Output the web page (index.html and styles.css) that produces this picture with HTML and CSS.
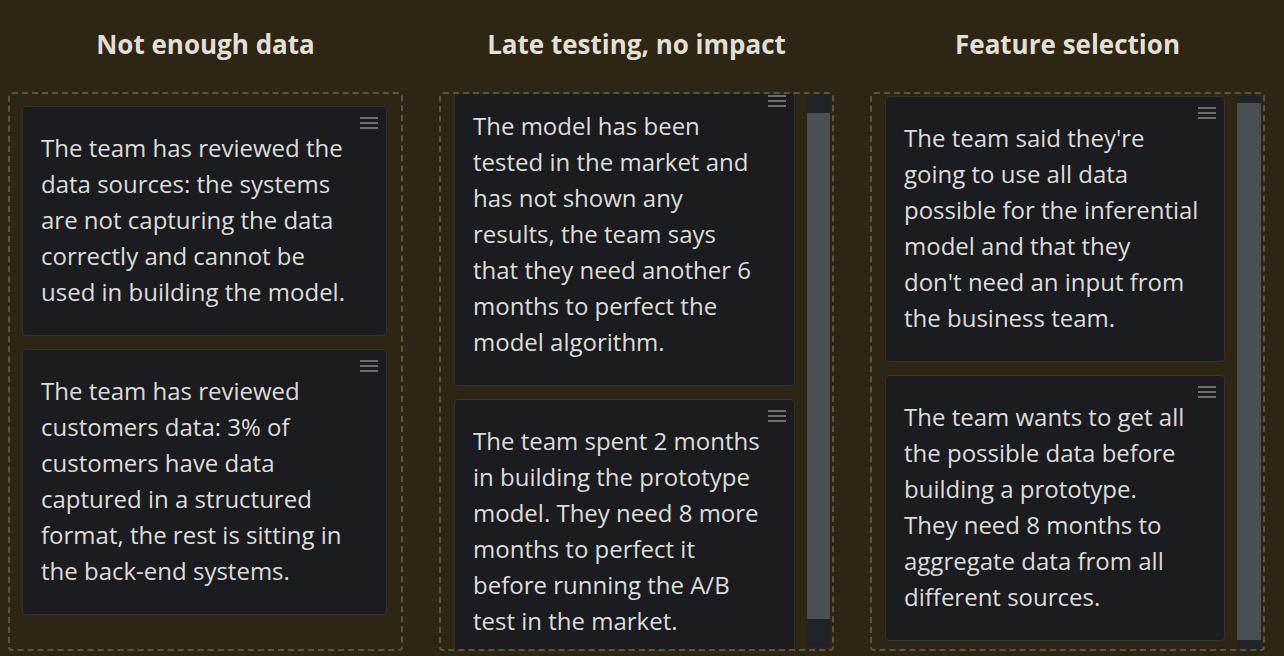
FILE: index.html
```html
<!DOCTYPE html>
<html>
<head>
<meta charset="utf-8">
<link rel="stylesheet" href="styles.css">
</head>
<body>
<div class="board">
  <section class="column">
    <h2 class="col-title">Not enough data</h2>
    <div class="col-box">
      <div class="cards">
        <div class="card"><span class="grip"></span><p>The team has reviewed the<br>data sources: the systems<br>are not capturing the data<br>correctly and cannot be<br>used in building the model.</p></div>
        <div class="card"><span class="grip"></span><p>The team has reviewed<br>customers data: 3% of<br>customers have data<br>captured in a structured<br>format, the rest is sitting in<br>the back-end systems.</p></div>
      </div>
    </div>
  </section>
  <section class="column">
    <h2 class="col-title">Late testing, no impact</h2>
    <div class="col-box scroll">
      <div class="viewport">
        <div class="cards shift-22">
          <div class="card narrow"><span class="grip"></span><p>The model has been<br>tested in the market and<br>has not shown any<br>results, the team says<br>that they need another 6<br>months to perfect the<br>model algorithm.</p></div>
          <div class="card narrow"><span class="grip"></span><p>The team spent 2 months<br>in building the prototype<br>model. They need 8 more<br>months to perfect it<br>before running the A/B<br>test in the market.</p></div>
        </div>
      </div>
      <div class="scrollbar sb-2"><div class="thumb"></div></div>
    </div>
  </section>
  <section class="column">
    <h2 class="col-title">Feature selection</h2>
    <div class="col-box scroll">
      <div class="viewport">
        <div class="cards shift-10">
          <div class="card narrow"><span class="grip"></span><p>The team said they're<br>going to use all data<br>possible for the inferential<br>model and that they<br>don't need an input from<br>the business team.</p></div>
          <div class="card narrow"><span class="grip"></span><p>The team wants to get all<br>the possible data before<br>building a prototype.<br>They need 8 months to<br>aggregate data from all<br>different sources.</p></div>
        </div>
      </div>
      <div class="scrollbar sb-3"><div class="thumb"></div></div>
    </div>
  </section>
</div>
</body>
</html>
```
FILE: styles.css
```css
html, body {
  margin: 0;
  padding: 0;
  background: #2e2615;
  width: 1284px;
  height: 656px;
  overflow: hidden;
}
body {
  font-family: "Open Sans", "Noto Sans", sans-serif;
  color: #dedcd8;
}
.board {
  display: grid;
  grid-template-columns: 395px 395px 395px;
  column-gap: 36px;
  padding-left: 8px;
}
.column {
  display: flex;
  flex-direction: column;
}
.col-title {
  margin: 0;
  height: 92px;
  box-sizing: border-box;
  padding-top: 27px;
  text-align: center;
  font-size: 26px;
  font-weight: 700;
  line-height: 34px;
  color: #e4dfd4;
}
.col-box {
  box-sizing: border-box;
  height: 559px;
  border: 2px dashed #5f5439;
  border-radius: 4px;
  padding: 12px 14px 0 12px;
  overflow: hidden;
}
.col-box.scroll {
  display: flex;
  padding: 0 2px 0 13px;
}
.viewport {
  flex: 1;
  overflow: hidden;
  height: 555px;
}
.cards {
  display: flex;
  flex-direction: column;
  gap: 13px;
}
.shift-22 { margin-top: -10px; }
.shift-10 { margin-top: 2px; gap: 13px; }
.card {
  position: relative;
  background: #1b1c1f;
  border: 1px solid #34332e;
  border-radius: 4px;
  padding: 23px 6px 25px 18px;
}
.card.narrow {
  margin-right: 12px;
}
.card p {
  margin: 0;
  font-size: 24px;
  font-weight: 500;
  line-height: 36px;
  color: #dddcd8;
  white-space: nowrap;
}
.grip {
  position: absolute;
  top: 10px;
  right: 8px;
  width: 18px;
  height: 12px;
  background:
    linear-gradient(#6c6c6c, #6c6c6c) 0 0 / 18px 2px no-repeat,
    linear-gradient(#6c6c6c, #6c6c6c) 0 5px / 18px 2px no-repeat,
    linear-gradient(#6c6c6c, #6c6c6c) 0 10px / 18px 2px no-repeat;
}
.scrollbar {
  width: 23px;
  flex: none;
  background: #202428;
  box-sizing: border-box;
}
.sb-2 {
  padding: 19px 0 28px;
  height: 553px;
}
.sb-3 {
  margin-top: 2px;
  padding: 7px 0 9px;
  height: 553px;
  width: 24px;
}
.thumb {
  height: 100%;
  background: #4a4f53;
}
```
